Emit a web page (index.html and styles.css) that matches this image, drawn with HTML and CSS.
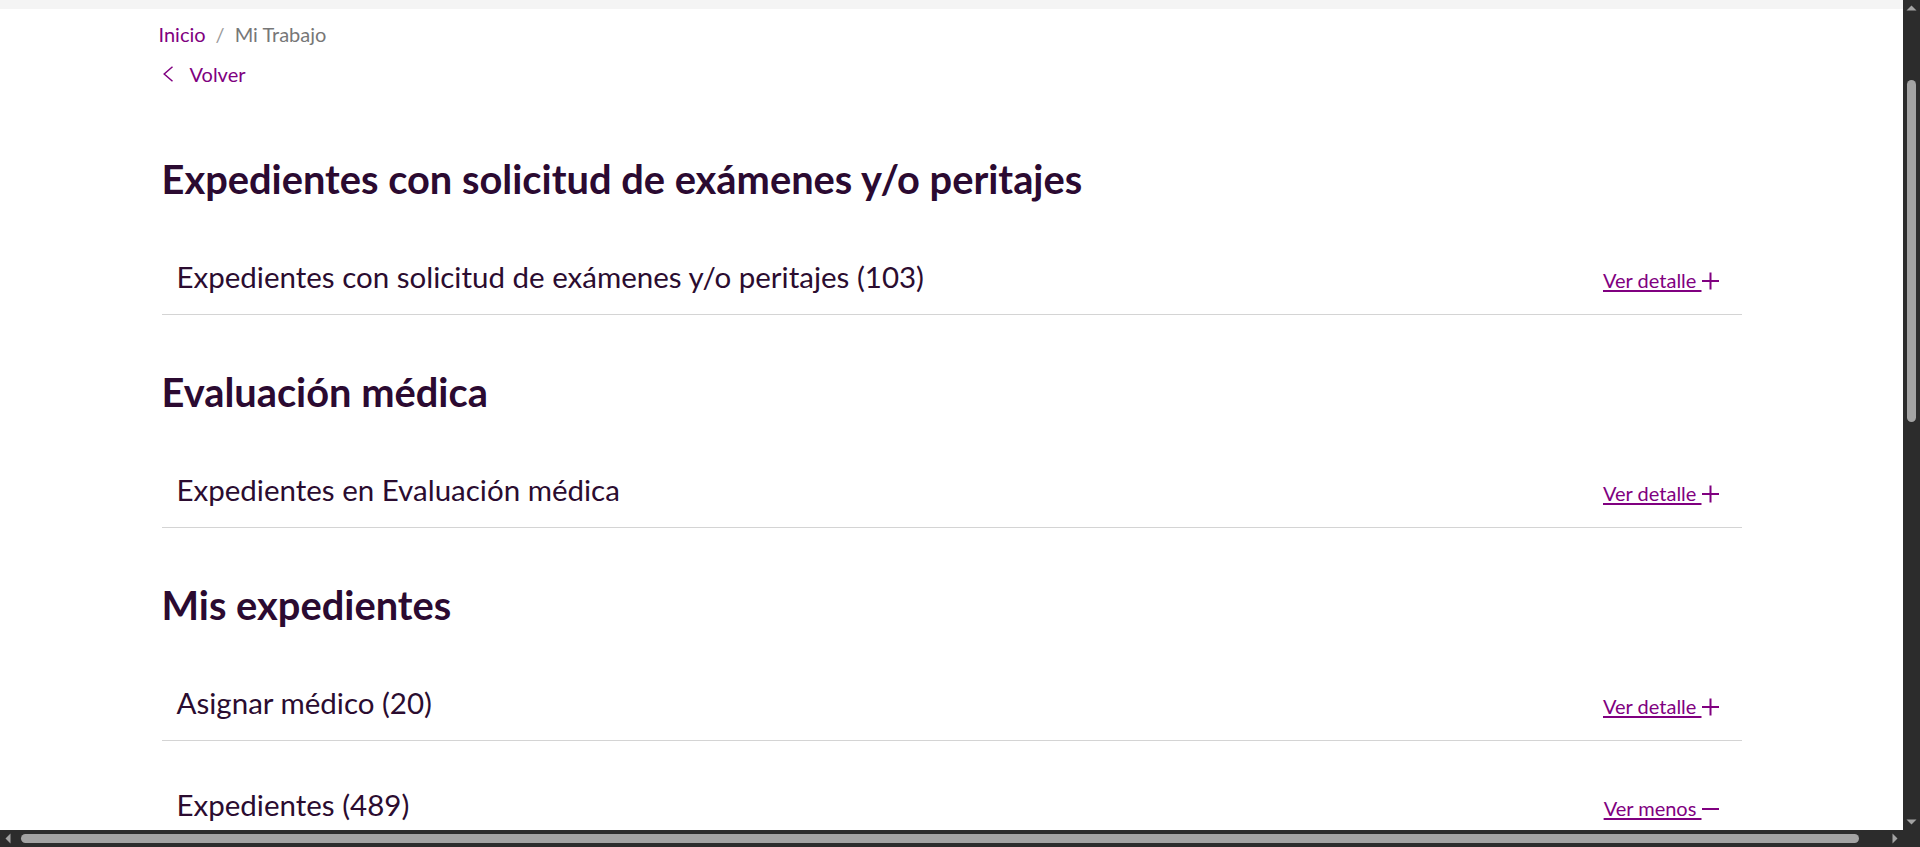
FILE: index.html
```html
<!DOCTYPE html>
<html lang="es">
<head>
<meta charset="utf-8">
<title>Mi Trabajo</title>
<link rel="stylesheet" href="styles.css">
</head>
<body>
<div class="window">
  <div class="page">
    <div class="topbar"></div>
    <main class="container">
      <nav class="breadcrumb">
        <a class="crumb-link" href="#">Inicio</a>
        <span class="crumb-sep">/</span>
        <span class="crumb-current">Mi Trabajo</span>
      </nav>
      <a class="back" href="#">
        <svg class="back-icon" width="12" height="16" viewBox="0 0 12 16"><path d="M10.5 0.8 L2.2 8 L10.5 15.2" fill="none" stroke="currentColor" stroke-width="1.5"/></svg>
        <span>Volver</span>
      </a>

      <section class="section">
        <h2 class="section-title">Expedientes con solicitud de exámenes y/o peritajes</h2>
        <div class="row">
          <span class="row-title">Expedientes con solicitud de exámenes y/o peritajes (103)</span>
          <a class="row-link" href="#">Ver detalle <svg class="row-icon" width="17" height="18" viewBox="0 0 17 18"><path d="M8.5 0.5V17.5M0 9H17" stroke="currentColor" stroke-width="2"/></svg></a>
        </div>
      </section>

      <section class="section">
        <h2 class="section-title">Evaluación médica</h2>
        <div class="row">
          <span class="row-title">Expedientes en Evaluación médica</span>
          <a class="row-link" href="#">Ver detalle <svg class="row-icon" width="17" height="18" viewBox="0 0 17 18"><path d="M8.5 0.5V17.5M0 9H17" stroke="currentColor" stroke-width="2"/></svg></a>
        </div>
      </section>

      <section class="section">
        <h2 class="section-title">Mis expedientes</h2>
        <div class="row">
          <span class="row-title">Asignar médico (20)</span>
          <a class="row-link" href="#">Ver detalle <svg class="row-icon" width="17" height="18" viewBox="0 0 17 18"><path d="M8.5 0.5V17.5M0 9H17" stroke="currentColor" stroke-width="2"/></svg></a>
        </div>
        <div class="row row-open">
          <span class="row-title">Expedientes (489)</span>
          <a class="row-link" href="#">Ver menos <svg class="row-icon" width="17" height="18" viewBox="0 0 17 18"><path d="M0 9H17" stroke="currentColor" stroke-width="2"/></svg></a>
        </div>
      </section>
    </main>
  </div>

  <div class="vbar">
    <svg class="sb-arrow" width="17" height="17" viewBox="0 0 17 17"><path d="M3.5 10.5 L8.5 5.5 L13.5 10.5 Z" fill="#a3a3a3"/></svg>
    <div class="vtrack">
      <div class="vthumb" style="margin-top: 63px; height: 342px;"></div>
    </div>
    <svg class="sb-arrow" width="17" height="17" viewBox="0 0 17 17"><path d="M3.5 6.5 L8.5 11.5 L13.5 6.5 Z" fill="#a3a3a3"/></svg>
  </div>

  <div class="hbar">
    <svg class="sb-arrow" width="17" height="17" viewBox="0 0 17 17"><path d="M10.5 3.5 L5.5 8.5 L10.5 13.5 Z" fill="#a3a3a3"/></svg>
    <div class="htrack">
      <div class="hthumb" style="margin-left: 4px; width: 1838px;"></div>
    </div>
    <svg class="sb-arrow" width="17" height="17" viewBox="0 0 17 17"><path d="M6.5 3.5 L11.5 8.5 L6.5 13.5 Z" fill="#a3a3a3"/></svg>
  </div>

  <div class="corner"></div>
</div>
</body>
</html>
```

FILE: styles.css
```css
html, body {
  margin: 0;
  padding: 0;
  height: 100%;
  overflow: hidden;
  background: #ffffff;
}

body {
  font-family: Lato, "Open Sans", sans-serif;
  color: #2b0c30;
}

.window {
  display: grid;
  grid-template-columns: 1fr 17px;
  grid-template-rows: 1fr 17px;
  height: 100vh;
}

.page {
  overflow: hidden;
  background: #ffffff;
  min-width: 0;
}

.topbar {
  height: 9px;
  background: #f4f4f4;
}

.container {
  width: 1580px;
  margin: 0 auto;
}

.breadcrumb {
  padding-top: 13px;
  margin-left: -3px;
  font-size: 20px;
  line-height: 24px;
  display: flex;
  gap: 10px;
}

.crumb-link {
  color: #800080;
  text-decoration: none;
}

.crumb-sep {
  color: #9a9a9a;
}

.crumb-current {
  color: #777777;
}

.back {
  margin-top: 16px;
  display: flex;
  align-items: center;
  gap: 16px;
  color: #800080;
  text-decoration: none;
  font-size: 20px;
  line-height: 24px;
  width: max-content;
}

.section-title {
  margin: 69px 0 10px;
  font-size: 39.8px;
  line-height: 48px;
  font-weight: 700;
  color: #2b0a31;
}

.section + .section .section-title {
  margin-top: 53px;
}

.row {
  display: flex;
  justify-content: space-between;
  align-items: baseline;
  padding: 44px 23px 17px 15px;
  border-bottom: 1px solid #d4d4d4;
}

.row-open {
  border-bottom: none;
}

.row-title {
  font-size: 29.5px;
  line-height: 40px;
  color: #2b0c30;
}

.row-link {
  color: #800080;
  font-size: 20px;
  line-height: 24px;
  text-decoration: underline;
  text-underline-offset: 2px;
}

.row-icon {
  vertical-align: -2px;
}

/* window scrollbars */
.vbar {
  grid-column: 2;
  grid-row: 1;
  background: #2c2c2c;
  display: flex;
  flex-direction: column;
}

.vtrack {
  flex: 1;
  display: flex;
  flex-direction: column;
  align-items: center;
}

.vthumb {
  width: 9px;
  border-radius: 5px;
  background: #a3a3a3;
}

.hbar {
  grid-column: 1;
  grid-row: 2;
  background: #2c2c2c;
  display: flex;
}

.htrack {
  flex: 1;
  display: flex;
  align-items: center;
}

.hthumb {
  height: 9px;
  border-radius: 5px;
  background: #a3a3a3;
}

.sb-arrow {
  display: block;
  flex: none;
}

.corner {
  grid-column: 2;
  grid-row: 2;
  background: #2c2c2c;
}
```
